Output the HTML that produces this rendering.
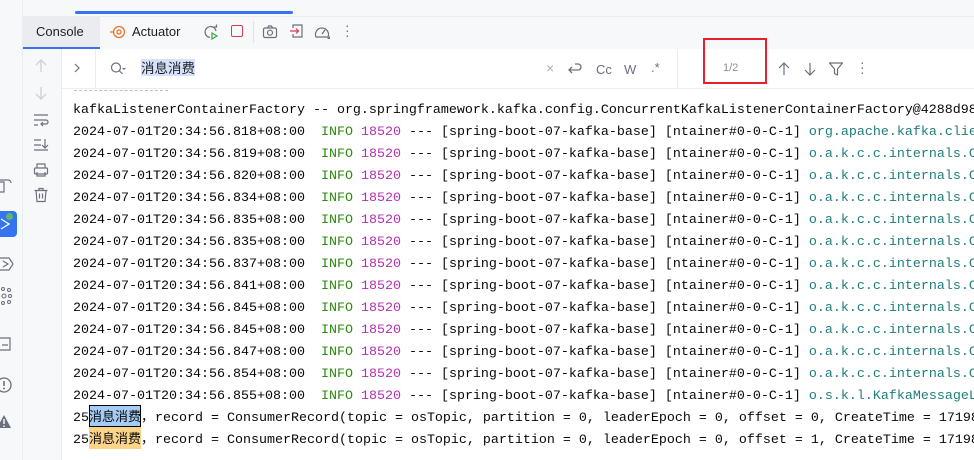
<!DOCTYPE html>
<html><head><meta charset="utf-8"><style>
*{margin:0;padding:0;box-sizing:border-box}
body{width:974px;height:460px;overflow:hidden;background:#fff;position:relative;font-family:"Liberation Sans","Noto Sans CJK SC",sans-serif}
.abs{position:absolute}
.mono{font-family:"Liberation Mono","Noto Sans CJK SC",monospace;font-size:13.33px;color:#080808;white-space:pre}
.line{position:absolute;left:73px;height:22px;line-height:22px}
.g{color:#2f8a12}.m{color:#b42eb4}.t{color:#1f7d7a}
.cj{font-family:"Noto Sans CJK SC",sans-serif;font-size:13px}
svg{position:absolute}
</style></head><body>
<div class="abs" style="left:0;top:0;width:974px;height:17px;background:#f7f8fa;border-bottom:1px solid #ebecf0"></div>
<div class="abs" style="left:75px;top:11px;width:218px;height:3px;background:#3574f0;border-radius:2px"></div>
<div class="abs" style="left:0;top:0;width:23px;height:460px;background:#f7f8fa;border-right:1px solid #ebecf0"></div>
<!-- tabs -->
<div class="abs" style="left:23px;top:17px;width:951px;height:32px;background:#f7f8fa"></div>
<div class="abs" style="left:23px;top:17px;width:77px;height:32px;background:#ebecf0;border-bottom:2px solid #3574f0;font-size:13px;line-height:30px;padding-left:13px;color:#1e1f22">Console</div>
<svg style="left:110px;top:24px" width="16" height="16" viewBox="0 0 16 16"><circle cx="9" cy="8" r="5.5" fill="none" stroke="#e8772e" stroke-width="1.3"/><circle cx="9" cy="8" r="2" fill="none" stroke="#e8772e" stroke-width="1.3"/><path d="M0 8h4" stroke="#e8772e" stroke-width="1.3"/></svg>
<div class="abs" style="left:132px;top:24px;font-size:13px;color:#1e1f22">Actuator</div>
<svg style="left:203px;top:24px" width="16" height="16" viewBox="0 0 16 16"><path d="M13 7A5.5 5.5 0 1 0 7 13.5" fill="none" stroke="#6c707e" stroke-width="1.2"/><path d="M11 3h2.5V.5" fill="none" stroke="#6c707e" stroke-width="1.2"/><path d="M9 9l5 3-5 3z" fill="none" stroke="#3fa33f" stroke-width="1.2"/></svg>
<div class="abs" style="left:231px;top:25px;width:12px;height:12px;border:1.3px solid #db3b4b;border-radius:2px"></div>
<div class="abs" style="left:253px;top:21px;width:1px;height:22px;background:#dfe1e5"></div>
<svg style="left:262px;top:24px" width="16" height="16" viewBox="0 0 16 16"><rect x="1.5" y="4" width="13" height="9.5" rx="1.5" fill="none" stroke="#6c707e" stroke-width="1.2"/><circle cx="8" cy="8.7" r="2.5" fill="none" stroke="#6c707e" stroke-width="1.2"/><path d="M5.5 4l1-2h3l1 2" fill="none" stroke="#6c707e" stroke-width="1.2"/></svg>
<svg style="left:289px;top:23px" width="16" height="16" viewBox="0 0 16 16"><path d="M4 5V2h9v12H4v-3" fill="none" stroke="#6c707e" stroke-width="1.2"/><path d="M1 8h8M7 5.5L9.5 8 7 10.5" fill="none" stroke="#db3b4b" stroke-width="1.2"/></svg>
<svg style="left:314px;top:24px" width="17" height="16" viewBox="0 0 17 16"><path d="M2 13A6.5 6.5 0 1 1 14 13z" fill="none" stroke="#6c707e" stroke-width="1.2"/><path d="M8 10l3-4" stroke="#6c707e" stroke-width="1.3"/><path d="M13 15l3-3v3z" fill="#6c707e"/></svg>
<div class="abs" style="left:345px;top:23px;width:3px;font-size:14px;color:#6c707e;line-height:5px">·<br>·<br>·</div>
<!-- gutter -->
<div class="abs" style="left:23px;top:49px;width:39px;height:411px;background:#f7f8fa;border-right:1px solid #ebecf0"></div>
<svg style="left:33px;top:58px" width="16" height="16" viewBox="0 0 16 16"><path d="M8 14V2M3 7l5-5 5 5" fill="none" stroke="#c9ccd6" stroke-width="1.2"/></svg>
<svg style="left:33px;top:85px" width="16" height="16" viewBox="0 0 16 16"><path d="M8 2v12M3 9l5 5 5-5" fill="none" stroke="#c9ccd6" stroke-width="1.2"/></svg>
<svg style="left:33px;top:112px" width="16" height="16" viewBox="0 0 16 16"><path d="M1 3h14M1 8h12a2 2 0 0 1 0 4H8M10 10l-2 2 2 2M1 13h4" fill="none" stroke="#6c707e" stroke-width="1.2"/></svg>
<svg style="left:33px;top:137px" width="16" height="16" viewBox="0 0 16 16"><path d="M1 3h7M1 8h7M1 13h14M12 2v9M9 8l3 3 3-3" fill="none" stroke="#6c707e" stroke-width="1.2"/></svg>
<svg style="left:33px;top:162px" width="16" height="16" viewBox="0 0 16 16"><rect x="1.5" y="6" width="13" height="6" rx="1" fill="none" stroke="#6c707e" stroke-width="1.2"/><path d="M4 6V2h8v4M4 10v4h8v-4" fill="none" stroke="#6c707e" stroke-width="1.2"/></svg>
<svg style="left:33px;top:187px" width="16" height="16" viewBox="0 0 16 16"><path d="M1.5 3.5h13M6 3.5V1.5h4v2M3 3.5l1 11h8l1-11M6.5 6.5v5M9.5 6.5v5" fill="none" stroke="#6c707e" stroke-width="1.2"/></svg>
<!-- left strip icons -->
<svg style="left:0;top:176px" width="12" height="20" viewBox="0 0 12 20"><path d="M0 4h8a3 3 0 0 1 3 3M0 6h4v10H0" fill="none" stroke="#6c707e" stroke-width="1.2"/></svg>
<div class="abs" style="left:-6px;top:211px;width:23px;height:26px;background:#3574f0;border-radius:4px"></div>
<svg style="left:0;top:214px" width="16" height="20" viewBox="0 0 16 20"><path d="M1 5l8 5-8 5" fill="none" stroke="#fff" stroke-width="1.3"/></svg>
<div class="abs" style="left:6px;top:213px;width:7px;height:7px;background:#5fb865;border-radius:50%"></div>
<svg style="left:0;top:256px" width="14" height="16" viewBox="0 0 14 16"><path d="M0 2h9l4 6-4 6H0M3 5l5 3-5 3" fill="none" stroke="#6c707e" stroke-width="1.2"/></svg>
<svg style="left:0;top:287px" width="14" height="18" viewBox="0 0 14 18"><circle cx="4" cy="9" r="2" fill="none" stroke="#6c707e" stroke-width="1.1"/><circle cx="9" cy="3" r="1.5" fill="none" stroke="#6c707e"/><circle cx="10" cy="9" r="1.5" fill="none" stroke="#6c707e"/><circle cx="9" cy="15" r="1.5" fill="none" stroke="#6c707e"/><circle cx="3" cy="2" r="1.5" fill="none" stroke="#6c707e"/><circle cx="3" cy="16" r="1.5" fill="none" stroke="#6c707e"/></svg>
<svg style="left:0;top:335px" width="14" height="18" viewBox="0 0 14 18"><path d="M0 3h10v12H0M2 10h6" fill="none" stroke="#6c707e" stroke-width="1.2"/></svg>
<svg style="left:0;top:375px" width="14" height="20" viewBox="0 0 14 20"><circle cx="4" cy="10" r="7" fill="none" stroke="#6c707e" stroke-width="1.3"/><path d="M4 6v5" stroke="#6c707e" stroke-width="1.6"/><circle cx="4" cy="13.5" r="1" fill="#6c707e"/></svg>
<svg style="left:0;top:414px" width="14" height="16" viewBox="0 0 14 16"><path d="M4 1L-3 14h14z" fill="#6c707e"/><path d="M4 5v5M4 11.5v1.5" stroke="#fff" stroke-width="1.4"/></svg>
<!-- search row -->
<div class="abs" style="left:62px;top:49px;width:912px;height:40px;background:#fff;border-bottom:1px solid #ebecf0"></div>
<div class="abs" style="left:95px;top:49px;width:1px;height:40px;background:#ebecf0"></div>
<div class="abs" style="left:677px;top:49px;width:1px;height:40px;background:#ebecf0"></div>
<svg style="left:72px;top:61px" width="10" height="14" viewBox="0 0 10 14"><path d="M3 3l4 4-4 4" fill="none" stroke="#6c707e" stroke-width="1.2"/></svg>
<svg style="left:110px;top:61px" width="18" height="16" viewBox="0 0 18 16"><circle cx="6" cy="6.5" r="4.5" fill="none" stroke="#6c707e" stroke-width="1.2"/><path d="M9.5 10l3 3" stroke="#6c707e" stroke-width="1.2"/><path d="M12 7h4l-2 2z" fill="#6c707e"/></svg>
<div class="abs cj" style="left:141px;top:59px;height:17px;line-height:17px;font-size:13.5px;background:#d6e2fb;color:#1e1f22">消息消费</div>
<div class="abs" style="left:546px;top:60px;font-size:14px;color:#a8adbd">×</div>
<svg style="left:566px;top:61px" width="16" height="16" viewBox="0 0 16 16"><path d="M9 3h3a3 3 0 0 1 0 6H3M6 6L3 9l3 3" fill="none" stroke="#6c707e" stroke-width="1.3"/></svg>
<div class="abs" style="left:596px;top:62px;font-size:13px;color:#6c707e">Cc</div>
<div class="abs" style="left:624px;top:62px;font-size:13px;color:#6c707e">W</div>
<div class="abs" style="left:651px;top:60px;font-size:13px;color:#6c707e">.*</div>
<div class="abs" style="left:703px;top:38px;width:64px;height:46px;border:2px solid #e5212b"></div>
<div class="abs" style="left:723px;top:62px;font-size:11px;color:#8c8f9a">1/2</div>
<svg style="left:776px;top:61px" width="16" height="16" viewBox="0 0 16 16"><path d="M8 14V2M3 7l5-5 5 5" fill="none" stroke="#6c707e" stroke-width="1.2"/></svg>
<svg style="left:802px;top:61px" width="16" height="16" viewBox="0 0 16 16"><path d="M8 2v12M3 9l5 5 5-5" fill="none" stroke="#6c707e" stroke-width="1.2"/></svg>
<svg style="left:828px;top:61px" width="16" height="16" viewBox="0 0 16 16"><path d="M1.5 2h13L9.5 8v6l-3-1.5V8z" fill="none" stroke="#6c707e" stroke-width="1.2" stroke-linejoin="round"/></svg>
<div class="abs" style="left:860px;top:60px;font-size:14px;color:#6c707e;line-height:5px">·<br>·<br>·</div>
<!-- console text -->
<div class="abs" style="left:74px;top:90px;width:94px;height:0;border-top:1px dashed #c0c0c0"></div>
<div class="line mono" style="top:100px">kafkaListenerContainerFactory -- org.springframework.kafka.config.ConcurrentKafkaListenerContainerFactory@4288d98</div>
<div class="line mono" style="top:122px">2024-07-01T20:34:56.818+08:00  <span class="g">INFO</span> <span class="m">18520</span> --- [spring-boot-07-kafka-base] [ntainer#0-0-C-1] <span class="t">org.apache.kafka.clie</span></div>
<div class="line mono" style="top:144px">2024-07-01T20:34:56.819+08:00  <span class="g">INFO</span> <span class="m">18520</span> --- [spring-boot-07-kafka-base] [ntainer#0-0-C-1] <span class="t">o.a.k.c.c.internals.C</span></div>
<div class="line mono" style="top:166px">2024-07-01T20:34:56.820+08:00  <span class="g">INFO</span> <span class="m">18520</span> --- [spring-boot-07-kafka-base] [ntainer#0-0-C-1] <span class="t">o.a.k.c.c.internals.C</span></div>
<div class="line mono" style="top:188px">2024-07-01T20:34:56.834+08:00  <span class="g">INFO</span> <span class="m">18520</span> --- [spring-boot-07-kafka-base] [ntainer#0-0-C-1] <span class="t">o.a.k.c.c.internals.C</span></div>
<div class="line mono" style="top:210px">2024-07-01T20:34:56.835+08:00  <span class="g">INFO</span> <span class="m">18520</span> --- [spring-boot-07-kafka-base] [ntainer#0-0-C-1] <span class="t">o.a.k.c.c.internals.C</span></div>
<div class="line mono" style="top:232px">2024-07-01T20:34:56.835+08:00  <span class="g">INFO</span> <span class="m">18520</span> --- [spring-boot-07-kafka-base] [ntainer#0-0-C-1] <span class="t">o.a.k.c.c.internals.C</span></div>
<div class="line mono" style="top:254px">2024-07-01T20:34:56.837+08:00  <span class="g">INFO</span> <span class="m">18520</span> --- [spring-boot-07-kafka-base] [ntainer#0-0-C-1] <span class="t">o.a.k.c.c.internals.C</span></div>
<div class="line mono" style="top:276px">2024-07-01T20:34:56.841+08:00  <span class="g">INFO</span> <span class="m">18520</span> --- [spring-boot-07-kafka-base] [ntainer#0-0-C-1] <span class="t">o.a.k.c.c.internals.C</span></div>
<div class="line mono" style="top:298px">2024-07-01T20:34:56.845+08:00  <span class="g">INFO</span> <span class="m">18520</span> --- [spring-boot-07-kafka-base] [ntainer#0-0-C-1] <span class="t">o.a.k.c.c.internals.C</span></div>
<div class="line mono" style="top:320px">2024-07-01T20:34:56.845+08:00  <span class="g">INFO</span> <span class="m">18520</span> --- [spring-boot-07-kafka-base] [ntainer#0-0-C-1] <span class="t">o.a.k.c.c.internals.C</span></div>
<div class="line mono" style="top:342px">2024-07-01T20:34:56.847+08:00  <span class="g">INFO</span> <span class="m">18520</span> --- [spring-boot-07-kafka-base] [ntainer#0-0-C-1] <span class="t">o.a.k.c.c.internals.C</span></div>
<div class="line mono" style="top:364px">2024-07-01T20:34:56.854+08:00  <span class="g">INFO</span> <span class="m">18520</span> --- [spring-boot-07-kafka-base] [ntainer#0-0-C-1] <span class="t">o.a.k.c.c.internals.C</span></div>
<div class="line mono" style="top:386px">2024-07-01T20:34:56.855+08:00  <span class="g">INFO</span> <span class="m">18520</span> --- [spring-boot-07-kafka-base] [ntainer#0-0-C-1] <span class="t">o.s.k.l.KafkaMessageL</span></div>
<div class="line mono" style="top:405px">25<span class="cj" style="display:inline-block;width:52px;height:22px;background:#a5cbf7;outline:1px solid #000;outline-offset:-1px">消息消费</span><span class="cj" style="display:inline-block;width:14px">，</span>record = ConsumerRecord(topic = osTopic, partition = 0, leaderEpoch = 0, offset = 0, CreateTime = 17198</div>
<div class="line mono" style="top:427px">25<span class="cj" style="display:inline-block;width:52px;height:22px;background:#fbd48a">消息消费</span><span class="cj" style="display:inline-block;width:14px">，</span>record = ConsumerRecord(topic = osTopic, partition = 0, leaderEpoch = 0, offset = 1, CreateTime = 17198</div>
</body></html>
